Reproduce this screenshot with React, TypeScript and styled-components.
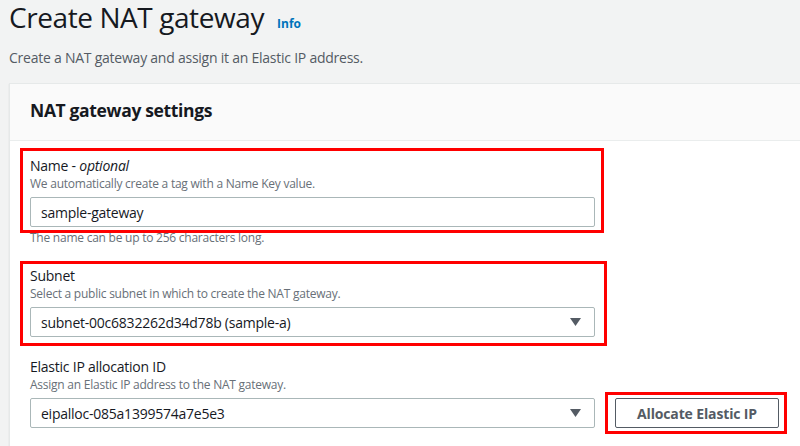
import styled, { createGlobalStyle } from "styled-components";

const GlobalStyle = createGlobalStyle`
    html, body {
        margin : 0;
        padding : 0;
        background-color : #f2f3f3;
        overflow : hidden;
    }
    body {
        font-family : "Open Sans", "Noto Sans", Arial, sans-serif;
        color : #16191f;
        letter-spacing : -0.015em;
    }
`;

const Page = styled.div`
    width : 800px;
    height : 446px;
    padding-left : 9px;
    box-sizing : border-box;
    overflow : hidden;
`;

const TitleRow = styled.div`
    display : flex;
    align-items : baseline;
    gap : 13px;
`;

const Title = styled.h1`
    margin : 0;
    font-size : 28px;
    line-height : 34px;
    font-weight : 400;
    color : #16191f;
    letter-spacing : -0.015em;
`;

const InfoLink = styled.a`
    font-size : 12px;
    font-weight : 700;
    color : #0073bb;
    text-decoration : none;
    letter-spacing : 0;
`;

const Subtitle = styled.p`
    margin : 13px 0 0;
    font-size : 14px;
    line-height : 22px;
    color : #545b64;
`;

const Panel = styled.section`
    margin-top : 14px;
    width : 840px;
    background-color : #ffffff;
    border-top : 1px solid #e6e9e9;
    border-left : 1px solid #e6e9e9;
    box-shadow : 0 1px 1px 0 rgba(0, 28, 36, 0.15);
`;

const PanelHeader = styled.div`
    background-color : #fafafa;
    padding : 15px 20px 19px;
    border-bottom : 1px solid #eaeded;
`;

const PanelTitle = styled.h2`
    margin : 0;
    font-size : 17.5px;
    line-height : 22px;
    font-weight : 700;
    color : #16191f;
    letter-spacing : -0.02em;
`;

const PanelBody = styled.div`
    padding : 15px 20px 30px;
    display : flex;
    flex-direction : column;
    align-items : flex-start;
    gap : 20px;
`;

const Field = styled.div`
    width : 565px;
    display : flex;
    flex-direction : column;
`;

type Box = { top: number; right: number; bottom: number; left: number };

const Highlight = styled.div<{ $box: Box; $align?: string }>`
    position : relative;
    align-self : ${p => p.$align ?? "flex-start"};
    &::after {
        content : "";
        position : absolute;
        top : ${p => -p.$box.top}px;
        right : ${p => -p.$box.right}px;
        bottom : ${p => -p.$box.bottom}px;
        left : ${p => -p.$box.left}px;
        border : 3px solid #ff0000;
        pointer-events : none;
    }
`;

const Label = styled.label`
    font-size : 14px;
    line-height : 20px;
    color : #16191f;
    em {
        font-style : italic;
    }
`;

const Description = styled.div`
    font-size : 12px;
    line-height : 16px;
    color : #687078;
    letter-spacing : -0.02em;
`;

const Control = styled.div`
    margin-top : 5px;
    height : 30px;
    box-sizing : border-box;
    border : 1px solid #aab7b8;
    border-radius : 2px;
    background-color : #ffffff;
    display : flex;
    align-items : center;
    justify-content : space-between;
    padding : 0 13px 0 10px;
    font-size : 14px;
    color : #16191f;
`;

const Caret = styled.svg`
    width : 11px;
    height : 8px;
    fill : #545b64;
`;

const Constraint = styled.div`
    margin-top : 3px;
    font-size : 12px;
    line-height : 16px;
    color : #687078;
`;

const ControlRow = styled.div`
    display : flex;
    align-items : flex-end;
    gap : 20px;
`;

const Button = styled.button`
    display : block;
    width : 164px;
    height : 30px;
    box-sizing : border-box;
    border : 1px solid #545b64;
    border-radius : 2px;
    background-color : #ffffff;
    color : #545b64;
    font-family : inherit;
    font-size : 14px;
    font-weight : 700;
    letter-spacing : -0.01em;
    cursor : pointer;
`;

function DropCaret() {
    return (
        <Caret viewBox="0 0 11 8">
            <path d="M0 0h11L5.5 8z" />
        </Caret>
    );
}

export default function App() {
    return (
        <Page>
            <GlobalStyle />
            <TitleRow>
                <Title>Create NAT gateway</Title>
                <InfoLink>Info</InfoLink>
            </TitleRow>
            <Subtitle>Create a NAT gateway and assign it an Elastic IP address.</Subtitle>
            <Panel>
                <PanelHeader>
                    <PanelTitle>NAT gateway settings</PanelTitle>
                </PanelHeader>
                <PanelBody>
                    <Field>
                        <Highlight $box={{ top: 8, right: 9, bottom: 6, left: 10 }}>
                            <Field>
                                <Label>Name - <em>optional</em></Label>
                                <Description>We automatically create a tag with a Name Key value.</Description>
                                <Control>sample-gateway</Control>
                            </Field>
                        </Highlight>
                        <Constraint>The name can be up to 256 characters long.</Constraint>
                    </Field>
                    <Highlight $box={{ top: 5, right: 12, bottom: 9, left: 10 }}>
                        <Field>
                            <Label>Subnet</Label>
                            <Description>Select a public subnet in which to create the NAT gateway.</Description>
                            <Control>
                                subnet-00c6832262d34d78b (sample-a)
                                <DropCaret />
                            </Control>
                        </Field>
                    </Highlight>
                    <ControlRow>
                        <Field>
                            <Label>Elastic IP allocation ID</Label>
                            <Description>Assign an Elastic IP address to the NAT gateway.</Description>
                            <Control>
                                eipalloc-085a1399574a7e5e3
                                <DropCaret />
                            </Control>
                        </Field>
                        <Highlight $align="flex-end" $box={{ top: 6, right: 8, bottom: 6, left: 10 }}>
                            <Button>Allocate Elastic IP</Button>
                        </Highlight>
                    </ControlRow>
                </PanelBody>
            </Panel>
        </Page>
    );
}
